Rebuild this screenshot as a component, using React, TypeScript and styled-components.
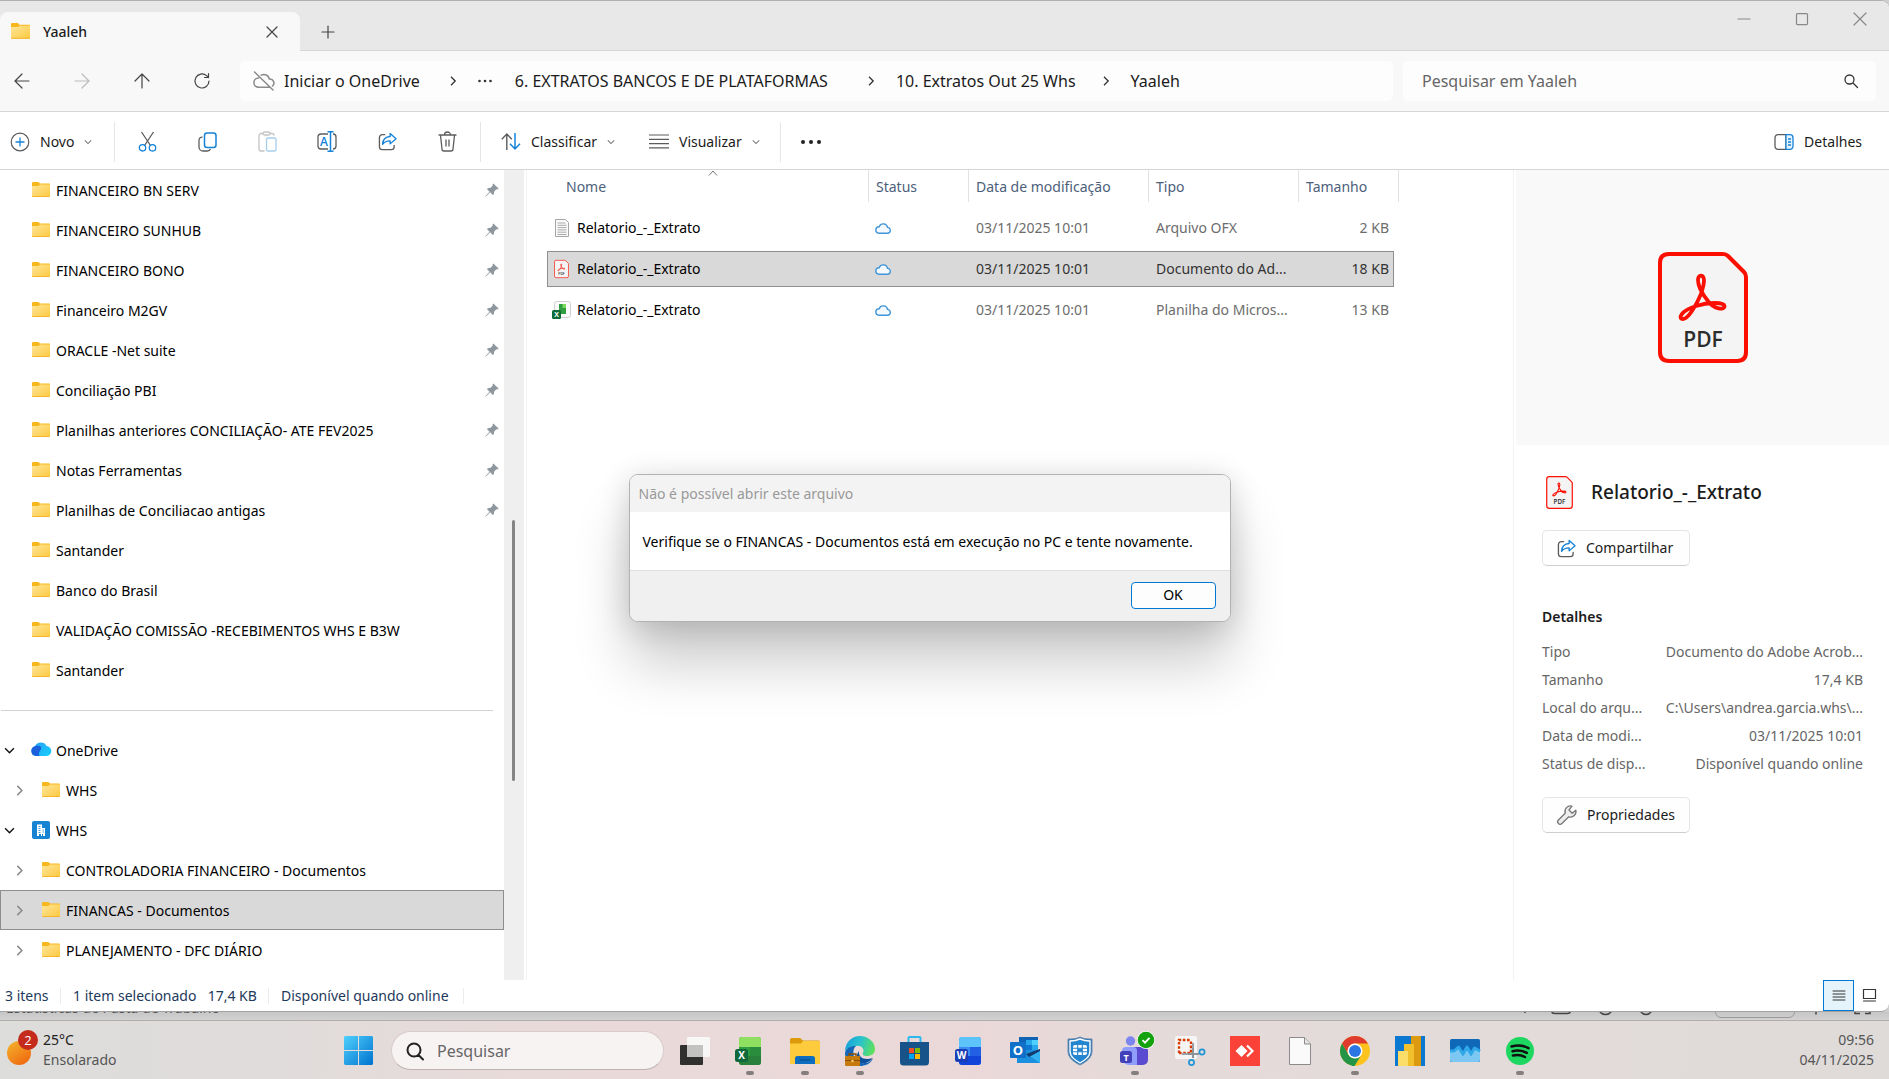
import React from "react";
import styled, { createGlobalStyle, css } from "styled-components";

const GlobalStyle = createGlobalStyle`
  *, *::before, *::after { box-sizing: border-box; }
  body { margin: 0; background: #cfcfcf; }
  body, button, input { font-family: "Noto Sans", "Open Sans", sans-serif; font-size: 14px; line-height: 20px; color: #1b1b1b; }
  button { background: none; border: 0; padding: 0; margin: 0; cursor: default; }
  h1, h2, p, dl, dd, dt, ul { margin: 0; padding: 0; font-weight: 400; list-style: none; }
`;

/* ---------- shell ---------- */

const Desktop = styled.div`
  min-height: 100vh;
  display: flex;
  flex-direction: column;
  position: relative;
  background: #cfcfcf;
`;

const ExplorerWindow = styled.section`
  flex: 1;
  display: flex;
  flex-direction: column;
  position: relative;
  background: #fff;
  border-top: 1px solid #b0b0b0;
  border-bottom: 1px solid #a3a3a3;
  border-radius: 0 8px 8px 0;
  overflow: hidden;
`;

const Svg = styled.svg`
  display: block;
  flex: none;
  overflow: visible;
`;

const Gap = styled.span<{ $w: number }>`
  width: ${(p) => p.$w}px;
  flex: none;
`;

/* ---------- title bar ---------- */

const TitleBar = styled.header`
  height: 50px;
  display: flex;
  align-items: flex-end;
  background: #e8e8e8;
  box-shadow: inset 0 -1px 0 #d6d6d6;
`;

const Tab = styled.div`
  width: 300px;
  height: 39px;
  display: flex;
  align-items: center;
  padding: 0 21px 0 11px;
  gap: 13px;
  background: #f8f8f8;
  border-radius: 8px 8px 0 0;
`;

const TabTitle = styled.h1`
  flex: 1;
  font-size: 14px;
  line-height: 20px;
  font-weight: 500;
`;

const IconButton = styled.button<{ $w?: number; $h?: number }>`
  width: ${(p) => p.$w ?? 60}px;
  height: ${(p) => p.$h ?? 40}px;
  display: flex;
  align-items: center;
  justify-content: center;
  flex: none;
`;

const WindowControls = styled.div`
  align-self: flex-start;
  margin-left: auto;
  display: flex;
`;

/* ---------- navigation ---------- */

const NavBar = styled.nav`
  height: 61px;
  display: flex;
  align-items: center;
  padding-right: 13px;
  background: #f8f8f8;
  border-bottom: 1px solid #d6d6d6;
`;

const NavButtons = styled.div`
  display: flex;
  width: 240px;
  margin-left: -8px;
  margin-right: 8px;
`;

const AddressBar = styled.div`
  flex: 1;
  height: 40px;
  display: flex;
  align-items: center;
  padding-left: 13px;
  background: #fdfdfd;
  border-radius: 5px;
`;

const Crumb = styled.button`
  font-size: 16px;
  line-height: 24px;
  white-space: nowrap;
`;

const CrumbChevron = styled.span<{ $w: number }>`
  width: ${(p) => p.$w}px;
  padding-right: 20px;
  display: flex;
  justify-content: flex-end;
  flex: none;
`;

const SearchBox = styled.label`
  width: 473px;
  height: 40px;
  margin-left: 10px;
  display: flex;
  align-items: center;
  padding: 0 18px 0 19px;
  background: #fdfdfd;
  border-radius: 5px;
`;

const SearchInput = styled.input`
  flex: 1;
  min-width: 0;
  border: 0;
  outline: 0;
  padding: 0;
  background: transparent;
  font-size: 16px;
  line-height: 24px;
  &::placeholder { color: #666; opacity: 1; }
`;

/* ---------- toolbar ---------- */

const ToolBar = styled.div`
  height: 58px;
  display: flex;
  align-items: center;
  padding: 2px 27px 0 10px;
  border-bottom: 1px solid #d6d6d6;
  background: #fff;
`;

const ToolButton = styled.button<{ $w?: number }>`
  height: 40px;
  display: flex;
  align-items: center;
  gap: 10px;
  width: ${(p) => (p.$w ? p.$w + "px" : "auto")};
  flex: none;
`;

const ToolDivider = styled.span`
  width: 1px;
  height: 40px;
  background: #e6e6e6;
  flex: none;
`;

const ToolSpacer = styled.span`
  flex: 1;
`;

/* ---------- body ---------- */

const Body = styled.div`
  flex: 1;
  display: flex;
  align-items: stretch;
`;

const Sidebar = styled.aside`
  width: 504px;
  flex: none;
  padding-bottom: 10px;
`;

const TreeRow = styled.li<{ $child?: boolean; $selected?: boolean }>`
  height: 40px;
  display: flex;
  align-items: center;
  padding: 0 5px 0 ${(p) => (p.$child ? 14 : 4)}px;
  white-space: nowrap;
  color: #000;
  ${(p) =>
    p.$selected &&
    css`
      background: #d9d9d9;
      box-shadow: inset 0 0 0 1px #8e8e8e;
    `}
`;

const TreeToggle = styled.span`
  width: 28px;
  flex: none;
`;

const TreeName = styled.span`
  flex: 1;
  padding: 1px 0 0 6px;
`;

const TreeSeparator = styled.li`
  height: 40px;
  display: flex;
  align-items: center;
  padding: 0 11px 0 1px;
  &::before { content: ""; flex: 1; height: 1px; background: #d2d2d2; }
`;

const ScrollTrack = styled.div`
  width: 20px;
  flex: none;
  background: #efefef;
`;

const ScrollThumb = styled.div`
  width: 3px;
  height: 261px;
  margin: 350px auto 0 8px;
  background: #858585;
  border-radius: 2px;
`;

const FilePane = styled.main`
  flex: 1;
  min-width: 0;
  margin-left: 2px;
  padding-left: 20px;
  border-left: 1px solid #f3f3f3;
`;

const FileTable = styled.table`
  display: block;
  thead, tbody { display: block; }
`;

const HeadRow = styled.tr`
  display: grid;
  grid-template-columns: 322px 100px 180px 150px 100px;
  height: 40px;
  align-items: start;
`;

const HeadCell = styled.th`
  position: relative;
  height: 32px;
  padding: 7px 0 0 7px;
  text-align: left;
  font-weight: 400;
  color: #4c607a;
  border-right: 1px solid #e2e2e2;
  &:first-child { padding-left: 19px; }
`;

const SortMark = styled.span`
  position: absolute;
  left: 50%;
  top: -2px;
`;

const FileRow = styled.tr<{ $selected?: boolean }>`
  display: grid;
  grid-template-columns: 322px 100px 180px 150px 95px;
  align-items: center;
  width: 847px;
  height: 36px;
  margin-bottom: 5px;
  color: ${(p) => (p.$selected ? "#333" : "#6d6d6d")};
  ${(p) =>
    p.$selected &&
    css`
      background: #d9d9d9;
      box-shadow: inset 0 0 0 1px #8e8e8e;
    `}
`;

const FileCell = styled.td<{ $right?: boolean }>`
  padding: ${(p) => (p.$right ? "0 5px 0 0" : "0 0 0 7px")};
  text-align: ${(p) => (p.$right ? "right" : "left")};
  white-space: nowrap;
`;

const FileName = styled.span`
  display: flex;
  align-items: center;
  gap: 8px;
  color: #000;
`;

const FileIcon = styled.span`
  width: 15px;
  display: flex;
  justify-content: center;
  flex: none;
`;

/* ---------- details pane ---------- */

const DetailsPane = styled.aside`
  width: 376px;
  flex: none;
  border-left: 1px solid #f3f3f3;
`;

const Preview = styled.div`
  height: 275px;
  margin-left: 2px;
  display: flex;
  justify-content: center;
  padding-top: 82px;
  background: #f9f9f9;
`;

const DetailsBody = styled.div`
  padding: 29px 26px 0 28px;
`;

const DetailsTitle = styled.div`
  display: flex;
  align-items: center;
  gap: 18px;
  padding-left: 4px;
  height: 36px;
  margin-bottom: 20px;
`;

const DetailsName = styled.h2`
  font-size: 19px;
  line-height: 24px;
  font-weight: 500;
`;

const PaneButton = styled.button`
  display: flex;
  align-items: center;
  gap: 10px;
  height: 36px;
  width: 148px;
  padding-left: 14px;
  border: 1px solid #e5e5e5;
  border-bottom-color: #cfcfcf;
  border-radius: 5px;
  background: #fefefe;
`;

const DetailsHeading = styled.h2`
  margin: 41px 0 11px;
  font-size: 14px;
  line-height: 20px;
  font-weight: 600;
`;

const DetailsList = styled.dl`
  margin-bottom: 19px;
`;

const DetailsRow = styled.div`
  display: flex;
  justify-content: space-between;
  height: 28px;
  align-items: center;
  white-space: nowrap;
  color: #666;
`;

/* ---------- status bar ---------- */

const StatusBar = styled.footer`
  height: 31px;
  display: flex;
  align-items: center;
  padding-left: 5px;
  color: #1e395b;
`;

const StatusItem = styled.span<{ $w: number }>`
  width: ${(p) => p.$w}px;
  margin-right: 12px;
  display: flex;
  justify-content: space-between;
  align-items: center;
  white-space: nowrap;
  &::after { content: ""; width: 1px; height: 16px; background: #ececec; }
`;

const ViewButtons = styled.div`
  margin-left: auto;
  display: flex;
  height: 31px;
`;

const ViewButton = styled.button<{ $active?: boolean }>`
  width: ${(p) => (p.$active ? 31 : 35)}px;
  padding-right: ${(p) => (p.$active ? 0 : 5)}px;
  display: flex;
  align-items: center;
  justify-content: center;
  ${(p) =>
    p.$active &&
    css`
      background: #e5f3fb;
      border: 1px solid #0078d4;
    `}
`;

/* ---------- sliver of the spreadsheet behind ---------- */

const BackWindow = styled.div`
  height: 8px;
  display: flex;
  align-items: flex-end;
  padding: 0 18px 0 6px;
  overflow: hidden;
  background: linear-gradient(#c6c6c6, #d2d2d2);
  color: #555;
`;

const BackText = styled.span`
  height: 22px;
  flex: 1;
  line-height: 20px;
  white-space: nowrap;
`;

const ZoomBox = styled.span`
  width: 80px;
  height: 24px;
  margin: 0 20px 2px 64px;
  padding-left: 8px;
  line-height: 19px;
  border: 1px solid #9a9a9a;
  border-radius: 6px;
`;

/* ---------- taskbar ---------- */

const TaskBar = styled.div`
  height: 60px;
  display: grid;
  grid-template-columns: 1fr auto 1fr;
  align-items: center;
  border-top: 1px solid #b3acac;
  background: linear-gradient(90deg, #dddddb 0%, #e0dcdb 15%, #e8dad9 28%, #ebd8d8 50%, #e4dad9 62%, #e2dbda 80%, #dfdbd9 100%);
`;

const Weather = styled.div`
  display: flex;
  align-items: center;
  padding-left: 7px;
  gap: 5px;
`;

const Stack = styled.div<{ $right?: boolean }>`
  display: flex;
  flex-direction: column;
  text-align: ${(p) => (p.$right ? "right" : "left")};
  padding: 0 ${(p) => (p.$right ? 15 : 0)}px 2px 0;
  color: #555;
`;

const Temperature = styled.span`
  color: #222;
`;

const TaskItems = styled.div`
  display: flex;
  align-items: center;
  padding-right: 11px;
`;

const TaskButton = styled.button<{ $open?: boolean }>`
  position: relative;
  width: 55px;
  height: 59px;
  display: flex;
  align-items: center;
  justify-content: center;
  ${(p) =>
    p.$open &&
    css`
      &::after {
        content: "";
        position: absolute;
        left: 24px;
        bottom: 5px;
        width: 8px;
        height: 4px;
        border-radius: 2px;
        background: #857e7e;
      }
    `}
`;

const TaskSearch = styled.label`
  width: 273px;
  height: 39px;
  margin: 0 3px 0 5px;
  display: flex;
  align-items: center;
  gap: 13px;
  padding: 0 14px;
  border: 1px solid #d9cccc;
  border-bottom-color: #bfb3b3;
  border-radius: 20px;
  background: #f8f3f3;
`;

/* ---------- message box ---------- */

const Dialog = styled.div`
  position: absolute;
  left: calc(50% - 316px);
  top: 474px;
  width: 602px;
  border: 1px solid #b2b2b2;
  border-radius: 9px;
  overflow: hidden;
  background: #fff;
  box-shadow: 0 42px 56px rgba(0, 0, 0, 0.2), 0 4px 30px rgba(0, 0, 0, 0.16);
`;

const DialogTitle = styled.h2`
  height: 37px;
  padding: 9px;
  font-size: 14px;
  line-height: 20px;
  color: #999;
  background: #f3f3f3;
`;

const DialogText = styled.p`
  height: 58px;
  padding: 20px 13px;
  color: #000;
  white-space: nowrap;
`;

const DialogFooter = styled.div`
  height: 51px;
  display: flex;
  justify-content: flex-end;
  align-items: center;
  padding: 0 14px 2px 0;
  border-top: 1px solid #dfdfdf;
  background: #f0f0f0;
`;

const OkButton = styled.button`
  width: 85px;
  height: 27px;
  border: 1px solid #0078d4;
  border-radius: 4px;
  background: #fdfdfd;
  color: #000;
`;

/* ---------- icons ---------- */

const BLUE = "#1683d8";
const GREY = "#5c5c5c";

const Folder = ({ w = 18 }: { w?: number }) => (
  <Svg width={w} height={w - 1} viewBox="0 0 18 17">
    <defs>
      <linearGradient id="folder" x1="0" y1="0" x2="1" y2="1">
        <stop offset="0" stopColor="#ffe59a" />
        <stop offset="1" stopColor="#fdc93f" />
      </linearGradient>
    </defs>
    <path d="M0 1a1 1 0 0 1 1-1h5.500L8 1.600H17a1 1 0 0 1 1 1V4H0z" fill="#f8b71c" />
    <path d="M0 4h6.500L8 2.600h10V14a1 1 0 0 1-1 1H1a1 1 0 0 1-1-1z" fill="url(#folder)" />
    <path d="M.3 14.500h17.400" stroke="#f3b52b" />
  </Svg>
);

const Chevron = ({ dir, size = 10, color = "#333", sw = 1.3 }: { dir: "up" | "down" | "right"; size?: number; color?: string; sw?: number }) => {
  const d = { up: "M1 7.500 5 3l4 4.500", down: "M1 3l4 4 4-4", right: "M3 .8 7.200 5 3 9.200" }[dir];
  return (
    <Svg width={size} height={size} viewBox="0 0 10 10" fill="none" stroke={color} strokeWidth={sw}>
      <path d={d} />
    </Svg>
  );
};

const Line = ({ d, w = 16, h = 16, color = "#444", sw = 1.2 }: { d: string; w?: number; h?: number; color?: string; sw?: number }) => (
  <Svg width={w} height={h} viewBox={`0 0 ${w} ${h}`} fill="none" stroke={color} strokeWidth={sw} strokeLinecap="round" strokeLinejoin="round">
    <path d={d} />
  </Svg>
);

const Pin = () => (
  <Svg width="14" height="14" viewBox="0 0 14 14">
    <path d="M8.300.4 13.600 5.600 12.200 6.600 11.400 6.300 9.200 8.600 8.800 11.300 7.800 12 5.200 9.300 1 13.400.3 13.700.6 12.900 4.600 8.700 2 6.200 2.700 5.300 5.600 4.800 7.800 2.600 7.500 1.500z" fill="#8e979e" />
  </Svg>
);

const ShareIcon = ({ size = 19 }: { size?: number }) => (
  <Svg width={size} height={size} viewBox="0 0 20 20" fill="none" strokeWidth="1.4" strokeLinejoin="round" strokeLinecap="round">
    <path d="M7 2.800H4.500A3 3 0 0 0 1.500 5.800V15.500a3 3 0 0 0 3 3H14a3 3 0 0 0 3-3V14" stroke={GREY} />
    <path d="M12.800 1.500 19 7l-6.200 5.500V9.300C9 9.200 6.800 10.400 4.800 13 5 8.200 8 5 12.800 4.700z" stroke={BLUE} />
  </Svg>
);

const PdfIcon = ({ w, h }: { w: number; h: number }) => (
  <Svg width={w} height={h} viewBox="0 0 90 111">
    <path d="M11 2h54q3 0 5 2l16 16q2 2 2 5v75q0 9-9 9H11q-9 0-9-9V11q0-9 9-9z" fill="#f4f4f4" stroke="#fa0f00" strokeWidth="4" />
    <path d="M43 42C38 54 30 67 25 67c-5 0-3-8 13-13 12-4 28-4 28.500 0C67 58 56 58 50 49 45 43 40 34 40 28c0-6 6-6 6 1 0 5-2 9-3 13z" fill="none" stroke="#fa0f00" strokeWidth="3.800" />
    <text x="45" y="95" textAnchor="middle" fontFamily="Open Sans, sans-serif" fontWeight="600" fontSize="21" fill="#2c2c2c">PDF</text>
  </Svg>
);

const CloudIcon = () => (
  <Svg width="16" height="12" viewBox="1 0 16 12" fill="#f4faff" stroke="#3f95d9" strokeWidth="1.400">
    <path d="M4 11.200h8.200a2.900 2.900 0 0 0 .4-5.800A4.400 4.400 0 0 0 4.200 4.700 3.200 3.200 0 0 0 4 11.200z" />
  </Svg>
);

const TextFileIcon = () => (
  <Svg width="14" height="18" viewBox="0 0 14 18">
    <path d="M.5.500h10l3 3v14H.5z" fill="#fafafa" stroke="#a5a5a5" />
    <path d="M2.500 4h8M2.500 6.300h9M2.500 8.600h9M2.500 10.900h9M2.500 13.200h9M2.500 15.500h9" stroke="#a9a9a9" />
  </Svg>
);

const ExcelFileIcon = () => (
  <Svg width="19" height="18" viewBox="0 0 19 18">
    <rect x="2.500" y=".5" width="16" height="16" rx="2" fill="#fafafa" stroke="#d0d0d0" />
    <rect x="7" y="3" width="7" height="10" fill="#2f9e41" />
    <rect x="10.500" y="3" width="3.500" height="4" fill="#7bd95c" />
    <rect x="0" y="9" width="9" height="9" rx="1.500" fill="#0f6b38" />
    <text x="4.500" y="16" textAnchor="middle" fontFamily="Open Sans, sans-serif" fontWeight="700" fontSize="7" fill="#fff">X</text>
  </Svg>
);

const OneDriveIcon = () => (
  <Svg width="18" height="14" viewBox="1 1 18 14">
    <defs>
      <linearGradient id="od" x1="0" y1="0" x2="1" y2="0.600">
        <stop offset="0" stopColor="#2a9df4" />
        <stop offset="1" stopColor="#19c8fb" />
      </linearGradient>
    </defs>
    <path d="M5 14a5 5 0 0 1-1-9.800A6.500 6.500 0 0 1 15.600 4 5 5 0 0 1 15 14z" fill="url(#od)" />
    <path d="M5 14A5 5 0 0 1 4 4.200C8 3 12 4.500 9.500 8 8 10 7 13 9 14z" fill="#1a5fdc" />
  </Svg>
);

const CompanyIcon = () => (
  <Svg width="18" height="18" viewBox="0 0 18 18">
    <rect width="18" height="18" rx="2" fill="#1784d3" />
    <path d="M5 15V3.500h5V7h3v8h-2v-2h-1v2H9v-2H7v2z" fill="#fff" />
    <path d="M6.500 5.500h2M6.500 7.500h2M6.500 9.500h2M6.500 11.500h2M10.500 9h1.500M10.500 11h1.500" stroke="#1784d3" strokeWidth=".8" />
  </Svg>
);

const AppTile = ({ letter, tint }: { letter: string; tint: [string, string, string, string] }) => (
  <Svg width="30" height="30" viewBox="0 0 30 30">
    <rect x="4" y="1" width="22" height="28" rx="3" fill={tint[1]} />
    <path d="M4 11V4a3 3 0 0 1 3-3h16a3 3 0 0 1 3 3v7z" fill={tint[0]} />
    <path d="M15 20V11h11v9z" fill={tint[2]} opacity=".6" />
    <path d="M4 20h22v6a3 3 0 0 1-3 3H7a3 3 0 0 1-3-3z" fill={tint[2]} />
    <rect x="0" y="13" width="13" height="13" rx="2.500" fill={tint[3]} />
    <text x="6.500" y="23" textAnchor="middle" fontFamily="Open Sans, sans-serif" fontWeight="700" fontSize="10" fill="#fff">{letter}</text>
  </Svg>
);

const WindowsLogo = () => (
  <Svg width="29" height="29" viewBox="0 0 29 29">
    <defs>
      <linearGradient id="win" x1="0" y1="0" x2="1" y2="1">
        <stop offset="0" stopColor="#4fd0fb" />
        <stop offset="1" stopColor="#0072d0" />
      </linearGradient>
    </defs>
    <path d="M1 0h13v14H0V1zM15 0h13l1 1v13H15zM0 15h14v14H1l-1-1zM15 15h14v13l-1 1H15z" fill="url(#win)" />
  </Svg>
);

const TaskView = () => (
  <Svg width="30" height="28" viewBox="0 0 30 28">
    <rect x="0" y="8" width="23" height="20" rx="1" fill="#30302f" />
    <rect x="7" y="0" width="23" height="20" rx="1" fill="#fafafa" opacity=".9" />
    <rect x="7" y="8" width="16" height="12" fill="#c4c1c1" />
  </Svg>
);

const ExplorerIcon = () => (
  <Svg width="30" height="26" viewBox="0 0 30 26">
    <path d="M0 1.500A1.500 1.500 0 0 1 1.500 0H10l3 2.500h15.500A1.500 1.500 0 0 1 30 4v6H0z" fill="#dd9b0c" />
    <path d="M0 5.500h11l2-2.500h17v23H0z" fill="#fdcb3c" />
    <path d="M5 26v-5.500a2.500 2.500 0 0 1 2.500-2.500h15a2.500 2.500 0 0 1 2.500 2.500V26z" fill="#0d6dbe" />
    <path d="M10 22h10" stroke="#0a4a88" strokeWidth="1.200" strokeLinecap="round" />
  </Svg>
);

const EdgeIcon = () => (
  <Svg width="30" height="30" viewBox="0 0 30 30">
    <defs>
      <linearGradient id="edge" x1="0" y1="0.300" x2="1" y2="0.500">
        <stop offset="0" stopColor="#1a9fdc" />
        <stop offset=".5" stopColor="#29c3cc" />
        <stop offset="1" stopColor="#5fe15a" />
      </linearGradient>
    </defs>
    <path d="M0 16C0 6 7 0 15 0s15 6 15 13c0 5-4 7-8 7-3 0-5-1-4-3 2-4-2-8-7-7C5 10 1 13 0 16z" fill="url(#edge)" />
    <path d="M0 17C1 12 6 9.500 11 10c-2 2-3 4-2.500 8C9 24 14 28 20 27c3 0 5-1.500 8-4-3 5-8 7-13 7C6 30 0 24 0 17z" fill="#1366b8" />
    <path d="M14 15c-1 6 5 10 14 7-3 4-8 6-12 5-4-1-6-7-2-12z" fill="#0e4f99" />
    <rect x="0" y="20" width="15" height="10" rx="1" fill="#c67a0b" />
    <path d="M4 20v-2h7v2" fill="none" stroke="#8a4f06" strokeWidth="1.500" />
    <path d="M0 24.500h15" stroke="#8a4f06" />
    <circle cx="7.500" cy="25" r="1.200" fill="#ffd463" />
  </Svg>
);

const StoreIcon = () => (
  <Svg width="30" height="30" viewBox="0 0 30 30">
    <path d="M8.500 7V2a1 1 0 0 1 1-1h10a1 1 0 0 1 1 1v5" fill="none" stroke="#2cb8ee" strokeWidth="2" />
    <path d="M0 6h29v20a3.500 3.500 0 0 1-3.500 3.500h-22A3.500 3.500 0 0 1 0 26z" fill="#175288" />
    <path d="M9 12h5v5H9z" fill="#f04f23" />
    <path d="M15 12h5v5h-5z" fill="#80b900" />
    <path d="M9 18h5v5H9z" fill="#00a3ee" />
    <path d="M15 18h5v5h-5z" fill="#ffb800" />
  </Svg>
);

const OutlookIcon = () => (
  <Svg width="30" height="27" viewBox="0 0 30 27">
    <rect x="9" y="0" width="19" height="15" fill="#0f63b5" />
    <path d="M16 3h6v5h-6z" fill="#28a8ea" />
    <path d="M22 3h6v5h-6z" fill="#50d0ff" />
    <path d="M16 8h6v5h-6z" fill="#0f78d4" />
    <path d="M22 8h6v5h-6z" fill="#28a8ea" />
    <path d="M7 13h23v13H7z" fill="#1a90de" />
    <path d="M30 13v13L17 17z" fill="#33b2f2" />
    <path d="M16 17l14-5v2L19 20z" fill="#123b6d" />
    <rect x="0" y="5" width="16" height="16" rx="1" fill="#0f6fc9" />
    <text x="8" y="18" textAnchor="middle" fontFamily="Open Sans, sans-serif" fontWeight="700" fontSize="13" fill="#fff">O</text>
  </Svg>
);

const ShieldIcon = () => (
  <Svg width="26" height="30" viewBox="0 0 26 30">
    <path d="M13 1c4 2 8 2 12 2v12c0 7-6 11-12 14C7 26 1 22 1 15V3c4 0 8 0 12-2z" fill="#1b74bd" stroke="#6e8ca8" strokeWidth="1" />
    <path d="M13 3c3.500 1.500 7 2 10 2v10c0 6-5 9-10 12C8 24 3 21 3 15V5c3 0 6.500-.5 10-2z" fill="#2384cf" stroke="#fff" strokeWidth="1.400" />
    <rect x="6" y="9" width="14" height="10" rx="2" fill="#fff" />
    <path d="M6 12.300h14M6 15.700h14M10.700 9v10M15.300 9v10" stroke="#2384cf" strokeWidth="1.100" />
    <rect x="11" y="12.500" width="4" height="3" fill="#2384cf" />
  </Svg>
);

const TeamsIcon = () => (
  <Svg width="30" height="30" viewBox="0 0 30 30">
    <circle cx="10.500" cy="5" r="4.700" fill="#7d85f0" />
    <path d="M14 11h10a4 4 0 0 1 4 4v9a5 5 0 0 1-5 5h-9z" fill="#5a4bd0" />
    <path d="M2 15a4 4 0 0 1 4-4h7a4 4 0 0 1 4 4v14H9a7 7 0 0 1-7-7z" fill="#8f9dfb" />
    <rect x="0" y="15" width="12" height="12" rx="2.500" fill="#4140b8" />
    <text x="6" y="25" textAnchor="middle" fontFamily="Open Sans, sans-serif" fontWeight="700" fontSize="9" fill="#fff">T</text>
    <circle cx="26" cy="4" r="9" fill="#fff" />
    <circle cx="26" cy="4" r="8.300" fill="#13a10e" />
    <path d="M22.500 4.200 25 6.700l4.500-4.800" fill="none" stroke="#fff" strokeWidth="1.800" />
  </Svg>
);

const SnipIcon = () => (
  <Svg width="30" height="30" viewBox="0 0 30 30" fill="none">
    <rect x="0" y="0" width="22" height="23" rx="2" fill="#f6f5f5" />
    <path d="M4 17V4h12" stroke="#d83b01" strokeWidth="2.400" strokeDasharray="2.600 1.600" />
    <path d="M4 17h12V5" stroke="#d83b01" strokeWidth="2.400" strokeDasharray="2.600 1.600" />
    <path d="M7 18h11V7" stroke="#9aa0a6" strokeWidth="2" />
    <path d="M18 12v10M13 18h11" stroke="#8c939a" strokeWidth="2" />
    <circle cx="16.500" cy="26.500" r="2.600" stroke="#1e96d6" strokeWidth="1.700" />
    <circle cx="27" cy="16" r="2.600" stroke="#1e96d6" strokeWidth="1.700" />
  </Svg>
);

const AnyDeskIcon = () => (
  <Svg width="30" height="30" viewBox="0 0 30 30">
    <rect width="30" height="30" fill="#fa4238" />
    <path d="M11.500 9l6 6-6 6-6-6z" fill="#fff" />
    <path d="M17 9.500 22.500 15 17 20.500" fill="none" stroke="#fff" strokeWidth="2.200" />
  </Svg>
);

const BlankFileIcon = () => (
  <Svg width="22" height="28" viewBox="0 0 22 28">
    <path d="M.5.500h15l6 6.500v20.500H.5z" fill="#fafafa" stroke="#8b8b8b" />
    <path d="M15.500.500V7h6" fill="#e4e4e4" stroke="#8b8b8b" />
  </Svg>
);

const ChromeIcon = () => (
  <Svg width="30" height="30" viewBox="0 0 30 30">
    <circle cx="15" cy="15" r="15" fill="#fcc31e" />
    <path d="M15 0a15 15 0 0 1 13 7.500H15a7.500 7.500 0 0 0-6.500 11.200L2 7.500A15 15 0 0 1 15 0z" fill="#df3b2f" />
    <path d="M2 7.500 8.500 18.800A7.500 7.500 0 0 0 17 22.200L14.500 30A15 15 0 0 1 2 7.500z" fill="#249447" />
    <path d="M8.500 18.800a7.500 7.500 0 0 0 13 0L14.500 30H12z" fill="#249447" />
    <circle cx="15" cy="15" r="7.500" fill="#fff" />
    <circle cx="15" cy="15" r="6" fill="#2c76e3" />
  </Svg>
);

const PowerBiIcon = () => (
  <Svg width="30" height="30" viewBox="0 0 30 30">
    <rect width="30" height="30" fill="#0a78d0" />
    <rect x="16" y="0" width="10" height="30" fill="#dc9a10" />
    <rect x="9" y="8" width="10" height="22" fill="#f2c02c" />
    <rect x="3" y="15" width="10" height="15" fill="#fbdd6a" />
  </Svg>
);

const MonitorIcon = () => (
  <Svg width="30" height="23" viewBox="0 0 30 23">
    <rect width="30" height="23" rx="1.500" fill="#0f69b8" />
    <path d="M0 13h4l5-4 4 8 4-8 4 8 4-8 5 4v8a2 2 0 0 1-2 2H2a2 2 0 0 1-2-2z" fill="#7cc8f2" />
    <path d="M0 12h4l4.500-4 4.500 7 4-7 4 7 3.500-6 5.500 3" fill="none" stroke="#2fa8ea" strokeWidth="3" strokeLinejoin="round" />
  </Svg>
);

const SpotifyIcon = () => (
  <Svg width="28" height="28" viewBox="0 0 28 28">
    <circle cx="14" cy="14" r="14" fill="#1ed760" />
    <path d="M5.500 9.500c5.500-1.600 12-1.200 17 1.700M6.500 14.200c4.500-1.300 10-.8 14.300 1.700M7 18.500c4-1 8.500-.6 12 1.500" fill="none" stroke="#111" strokeWidth="2.500" strokeLinecap="round" />
  </Svg>
);

const WeatherIcon = () => (
  <Svg width="31" height="38" viewBox="0 0 31 38">
    <defs>
      <linearGradient id="sun" x1="0" y1="0" x2="0.700" y2="1">
        <stop offset="0" stopColor="#f4b62d" />
        <stop offset="1" stopColor="#f06a10" />
      </linearGradient>
    </defs>
    <circle cx="12" cy="21" r="12" fill="url(#sun)" />
    <circle cx="21" cy="8" r="10" fill="#c42b1c" />
    <text x="21" y="13" textAnchor="middle" fontFamily="Open Sans, sans-serif" fontSize="13" fill="#fff">2</text>
  </Svg>
);

/* ---------- data ---------- */

const pinned = [
  "FINANCEIRO BN SERV",
  "FINANCEIRO SUNHUB",
  "FINANCEIRO BONO",
  "Financeiro M2GV",
  "ORACLE -Net suite",
  "Conciliação PBI",
  "Planilhas anteriores CONCILIAÇÃO- ATE FEV2025",
  "Notas Ferramentas",
  "Planilhas de Conciliacao antigas",
];

const recent = ["Santander", "Banco do Brasil", "VALIDAÇÃO COMISSÃO -RECEBIMENTOS WHS E B3W", "Santander"];

const libraries = ["CONTROLADORIA FINANCEIRO - Documentos", "FINANCAS - Documentos", "PLANEJAMENTO - DFC DIÁRIO"];

const files = [
  { icon: <TextFileIcon />, type: "Arquivo OFX", size: "2 KB" },
  { icon: <PdfIcon w={15} h={18} />, type: "Documento do Ad...", size: "18 KB", selected: true },
  { icon: <ExcelFileIcon />, type: "Planilha do Micros...", size: "13 KB" },
];

const details = [
  ["Tipo", "Documento do Adobe Acrob..."],
  ["Tamanho", "17,4 KB"],
  ["Local do arqu...", "C:\\Users\\andrea.garcia.whs\\..."],
  ["Data de modi...", "03/11/2025 10:01"],
  ["Status de disp...", "Disponível quando online"],
];

const apps: { name: string; icon: React.ReactNode; open?: boolean }[] = [
  { name: "Visão de tarefas", icon: <TaskView /> },
  { name: "Excel", icon: <AppTile letter="X" tint={["#8fe060", "#2f9e41", "#28803a", "#11683a"]} />, open: true },
  { name: "Explorador de Arquivos", icon: <ExplorerIcon />, open: true },
  { name: "Edge", icon: <EdgeIcon />, open: true },
  { name: "Store", icon: <StoreIcon /> },
  { name: "Word", icon: <AppTile letter="W" tint={["#5cc3fb", "#3a8bf3", "#1144d8", "#1a3fb4"]} /> },
  { name: "Outlook", icon: <OutlookIcon /> },
  { name: "VPN", icon: <ShieldIcon /> },
  { name: "Teams", icon: <TeamsIcon />, open: true },
  { name: "Ferramenta de Captura", icon: <SnipIcon /> },
  { name: "AnyDesk", icon: <AnyDeskIcon /> },
  { name: "Documento", icon: <BlankFileIcon /> },
  { name: "Chrome", icon: <ChromeIcon />, open: true },
  { name: "Power BI", icon: <PowerBiIcon /> },
  { name: "Monitor", icon: <MonitorIcon /> },
  { name: "Spotify", icon: <SpotifyIcon />, open: true },
];

/* ---------- parts ---------- */

const TreeItem = ({ name, icon, open, child, pin, selected }: { name: string; icon?: React.ReactNode; open?: boolean; child?: boolean; pin?: boolean; selected?: boolean }) => (
  <TreeRow $child={child} $selected={selected}>
    <TreeToggle>
      {open && <Chevron dir="down" size={11} color="#111" />}
      {child && <Chevron dir="right" size={11} color="#888" />}
    </TreeToggle>
    {icon ?? <Folder />}
    <TreeName>{name}</TreeName>
    {pin && <Pin />}
  </TreeRow>
);

const Commands = () => (
  <ToolBar>
    <ToolButton $w={104}>
      <Svg width="20" height="20" viewBox="0 0 20 20" fill="none">
        <circle cx="10" cy="10" r="8.800" stroke={GREY} strokeWidth="1.200" />
        <path d="M10 5.500v9M5.500 10h9" stroke={BLUE} strokeWidth="1.300" />
      </Svg>
      Novo
      <Chevron dir="down" size={8} color="#777" />
    </ToolButton>
    <ToolDivider />
    <Gap $w={2} />
    <IconButton aria-label="Recortar">
      <Svg width="19" height="21" viewBox="0 0 19 21" fill="none" strokeWidth="1.300">
        <path d="M3.500 1 12.500 14.500M15.500 1 6.500 14.500" stroke={GREY} />
        <circle cx="4.500" cy="16.800" r="3.200" stroke={BLUE} />
        <circle cx="14.500" cy="16.800" r="3.200" stroke={BLUE} />
      </Svg>
    </IconButton>
    <IconButton aria-label="Copiar">
      <Svg width="19" height="20" viewBox="0 0 19 20" fill="none" strokeWidth="1.300">
        <path d="M4.500 5.200A3 3 0 0 0 1 8v7a4 4 0 0 0 4 4h4a3.500 3.500 0 0 0 3.500-2" stroke={GREY} />
        <rect x="6.500" y="1" width="11.500" height="14.500" rx="2.500" stroke={BLUE} strokeWidth="1.500" />
      </Svg>
    </IconButton>
    <IconButton aria-label="Colar" disabled>
      <Svg width="19" height="21" viewBox="0 0 19 21" fill="none" strokeWidth="1.300">
        <path d="M5 2.500H3A2 2 0 0 0 1 4.500V18a2 2 0 0 0 2 2h3.500M12 2.500h2a2 2 0 0 1 2 2" stroke="#c4c4c4" />
        <rect x="5" y="1" width="7" height="3" rx="1.500" stroke="#c4c4c4" />
        <rect x="8.500" y="7" width="9.500" height="13" rx="1.500" stroke="#a5cdec" />
      </Svg>
    </IconButton>
    <IconButton aria-label="Renomear">
      <Svg width="20" height="21" viewBox="0 0 20 21" fill="none" strokeWidth="1.300">
        <path d="M11 3H4a3 3 0 0 0-3 3v9a3 3 0 0 0 3 3h7M16 3a3 3 0 0 1 3 3v9a3 3 0 0 1-3 3" stroke={GREY} />
        <path d="M10.500.8h6M10.500 20.200h6M13.500.8v19.400" stroke={BLUE} strokeWidth="1.500" />
        <text x="7" y="15" textAnchor="middle" fontFamily="Open Sans, sans-serif" fontSize="12" fontWeight="600" fill={BLUE}>A</text>
      </Svg>
    </IconButton>
    <IconButton aria-label="Compartilhar"><ShareIcon /></IconButton>
    <IconButton aria-label="Excluir">
      <Svg width="19" height="21" viewBox="0 0 19 21" fill="none" stroke={GREY} strokeWidth="1.300" strokeLinecap="round">
        <path d="M1 4h17M6.500 4a3 3 0 0 1 6 0M2.500 4.200 4 18a2 2 0 0 0 2 2h7a2 2 0 0 0 2-2l1.500-13.800M8 9v6M11 9v6" />
      </Svg>
    </IconButton>
    <Gap $w={3} />
    <ToolDivider />
    <Gap $w={20} />
    <ToolButton $w={148}>
      <Svg width="20" height="17" viewBox="0 0 20 17" fill="none" strokeWidth="1.400">
        <path d="M5.800 17V1M.8 6.200 5.800 1l5 5.200" stroke={GREY} />
        <path d="M14 0v16M9 10.800l5 5.200 5-5.200" stroke={BLUE} strokeWidth="1.500" />
      </Svg>
      Classificar
      <Chevron dir="down" size={8} color="#777" />
    </ToolButton>
    <ToolButton $w={131}>
      <Svg width="20" height="15" viewBox="0 0 20 15" stroke={GREY} strokeWidth="1.200">
        <path d="M0 1h20M0 5.300h20M0 9.600h20M0 13.900h20" />
      </Svg>
      Visualizar
      <Chevron dir="down" size={8} color="#777" />
    </ToolButton>
    <ToolDivider />
    <IconButton aria-label="Ver mais">
      <Svg width="20" height="4" viewBox="0 0 20 4" fill="#222">
        <circle cx="2" cy="2" r="2" /><circle cx="10" cy="2" r="2" /><circle cx="18" cy="2" r="2" />
      </Svg>
    </IconButton>
    <ToolSpacer />
    <ToolButton>
      <Svg width="20" height="16" viewBox="0 0 20 16" fill="none" strokeWidth="1.300">
        <path d="M12 .7H4a3 3 0 0 0-3 3v8.600a3 3 0 0 0 3 3h8z" stroke={GREY} />
        <path d="M12 .7h4a3 3 0 0 1 3 3v8.600a3 3 0 0 1-3 3h-4z" stroke={BLUE} fill="#e7f3fc" />
        <path d="M14 5h3M14 8h3M14 11h3" stroke={BLUE} />
      </Svg>
      Detalhes
    </ToolButton>
  </ToolBar>
);

const Details = () => (
  <DetailsPane>
    <Preview><PdfIcon w={90} h={111} /></Preview>
    <DetailsBody>
      <DetailsTitle>
        <PdfIcon w={27} h={33} />
        <DetailsName>Relatorio_-_Extrato</DetailsName>
      </DetailsTitle>
      <PaneButton><ShareIcon />Compartilhar</PaneButton>
      <DetailsHeading>Detalhes</DetailsHeading>
      <DetailsList>
        {details.map(([label, value]) => (
          <DetailsRow key={label}>
            <dt>{label}</dt>
            <dd>{value}</dd>
          </DetailsRow>
        ))}
      </DetailsList>
      <PaneButton>
        <Svg width="20" height="20" viewBox="0 0 20 20" fill="#ededed" stroke="#777" strokeWidth="1.300" strokeLinejoin="round">
          <path d="M18.800 5.200 15.200 8.200 12 5l3-3.800a5.500 5.500 0 0 0-6.800 7L1.400 15a2.400 2.400 0 0 0 3.500 3.500l6.900-6.700a5.500 5.500 0 0 0 7-6.600z" />
        </Svg>
        Propriedades
      </PaneButton>
    </DetailsBody>
  </DetailsPane>
);

export default function App() {
  return (
    <Desktop>
      <GlobalStyle />
      <ExplorerWindow>
        <TitleBar>
          <Tab>
            <Folder w={19} />
            <TabTitle>Yaaleh</TabTitle>
            <IconButton $w={14} $h={20} aria-label="Fechar guia"><Line d="M1 1l10 10M11 1 1 11" w={12} h={12} /></IconButton>
          </Tab>
          <IconButton $w={56} $h={38} aria-label="Nova guia"><Line d="M6 0v12M0 6h12" w={12} h={12} /></IconButton>
          <WindowControls>
            <IconButton $w={58} $h={36} aria-label="Minimizar"><Line d="M0 6h12" w={12} h={12} color="#888" /></IconButton>
            <IconButton $w={58} $h={36} aria-label="Maximizar"><Line d="M1.500.600h9q1 0 1 1v9q0 1-1 1h-9q-1 0-1-1v-9q0-1 1-1z" w={12} h={12} color="#888" /></IconButton>
            <IconButton $w={58} $h={36} aria-label="Fechar"><Line d="M0 0l12 12M12 0 0 12" w={12} h={12} color="#888" /></IconButton>
          </WindowControls>
        </TitleBar>

        <NavBar>
          <NavButtons>
            <IconButton aria-label="Voltar"><Line d="M15 8H1M8 1 1 8l7 7" w={16} h={16} /></IconButton>
            <IconButton aria-label="Avançar"><Line d="M1 8h14M8 1l7 7-7 7" w={16} h={16} color="#bbb" /></IconButton>
            <IconButton aria-label="Acima"><Line d="M8 15V1M1 8l7-7 7 7" w={16} h={16} /></IconButton>
            <IconButton aria-label="Atualizar"><Line d="M15 8A7 7 0 1 1 12.500 2.600L14.500 4.500M14.500.500v4h-4" w={16} h={16} /></IconButton>
          </NavButtons>
          <AddressBar>
            <Svg width="22" height="20" viewBox="0 0 22 20" fill="none" stroke="#8a8a8a" strokeWidth="1.500" strokeLinecap="round">
              <path d="M1.500 1 20 19M5.500 7A4.600 4.600 0 0 0 5.500 16.200H16.500M8.200 4.200A5.500 5.500 0 0 1 16.400 8 4 4 0 0 1 19.500 15" />
            </Svg>
            <Gap $w={9} />
            <Crumb>Iniciar o OneDrive</Crumb>
            <CrumbChevron $w={58}><Chevron dir="right" size={10} /></CrumbChevron>
            <Svg width="14" height="4" viewBox="0 0 14 4" fill="#333"><circle cx="1.500" cy="2" r="1.300" /><circle cx="7" cy="2" r="1.300" /><circle cx="12.500" cy="2" r="1.300" /></Svg>
            <Gap $w={23} />
            <Crumb>6. EXTRATOS BANCOS E DE PLATAFORMAS</Crumb>
            <CrumbChevron $w={68}><Chevron dir="right" size={10} /></CrumbChevron>
            <Crumb>10. Extratos Out 25 Whs</Crumb>
            <CrumbChevron $w={55}><Chevron dir="right" size={10} /></CrumbChevron>
            <Crumb>Yaaleh</Crumb>
          </AddressBar>
          <SearchBox>
            <SearchInput type="text" placeholder="Pesquisar em Yaaleh" aria-label="Pesquisar em Yaaleh" />
            <Line d="M5.500 1a4.500 4.500 0 1 1 0 9 4.500 4.500 0 0 1 0-9zM9 9l4.500 4.500" w={14} h={14} color="#333" sw={1.300} />
          </SearchBox>
        </NavBar>

        <Commands />

        <Body>
          <Sidebar>
            <ul>
              {pinned.map((name) => <TreeItem key={name} name={name} pin />)}
              {recent.map((name, i) => <TreeItem key={i} name={name} />)}
              <TreeSeparator />
              <TreeItem name="OneDrive" icon={<OneDriveIcon />} open />
              <TreeItem name="WHS" child />
              <TreeItem name="WHS" icon={<CompanyIcon />} open />
              {libraries.map((name, i) => <TreeItem key={name} name={name} child selected={i === 1} />)}
            </ul>
          </Sidebar>
          <ScrollTrack><ScrollThumb /></ScrollTrack>
          <FilePane>
            <FileTable>
              <thead>
                <HeadRow>
                  <HeadCell>Nome<SortMark><Chevron dir="up" color="#777" sw={1} /></SortMark></HeadCell>
                  <HeadCell>Status</HeadCell>
                  <HeadCell>Data de modificação</HeadCell>
                  <HeadCell>Tipo</HeadCell>
                  <HeadCell>Tamanho</HeadCell>
                </HeadRow>
              </thead>
              <tbody>
                {files.map((f) => (
                  <FileRow key={f.type} $selected={f.selected}>
                    <FileCell><FileName><FileIcon>{f.icon}</FileIcon>Relatorio_-_Extrato</FileName></FileCell>
                    <FileCell><CloudIcon /></FileCell>
                    <FileCell>03/11/2025 10:01</FileCell>
                    <FileCell>{f.type}</FileCell>
                    <FileCell $right>{f.size}</FileCell>
                  </FileRow>
                ))}
              </tbody>
            </FileTable>
          </FilePane>
          <Details />
        </Body>

        <StatusBar>
          <StatusItem $w={56}>3 itens</StatusItem>
          <StatusItem $w={196}><span>1 item selecionado</span><span>17,4 KB</span></StatusItem>
          <StatusItem $w={183}>Disponível quando online</StatusItem>
          <ViewButtons>
            <ViewButton $active aria-label="Detalhes"><Line d="M0 1h12M0 4h12M0 7h12M0 10h12" w={12} h={11} color="#333" sw={1} /></ViewButton>
            <ViewButton aria-label="Ícones grandes"><Line d="M.5.500h12v9H.5zM.5 12h12" w={13} h={13} color="#333" sw={1.200} /></ViewButton>
          </ViewButtons>
        </StatusBar>
      </ExplorerWindow>

      <BackWindow>
        <BackText>Estatísticas de Pasta de Trabalho</BackText>
        <Svg width="127" height="8" viewBox="0 0 127 8" fill="none" stroke="#444" strokeWidth="1.500">
          <path d="M1 0v1M28 0q0 1.500 3 1.500h12q3 0 3-1.500M76 0q2 2.500 5.500 2.500T87 0M117 0q2 2.500 5 2.500T127 0" />
        </Svg>
        <ZoomBox>83%</ZoomBox>
        <Svg width="56" height="8" viewBox="0 0 56 8" fill="none" stroke="#444" strokeWidth="1.500">
          <path d="M1 0v2.500M40 0v1.500h5M50 1.500h5V0" />
        </Svg>
      </BackWindow>

      <TaskBar>
        <Weather>
          <WeatherIcon />
          <Stack><Temperature>25°C</Temperature><span>Ensolarado</span></Stack>
        </Weather>
        <TaskItems>
          <TaskButton aria-label="Iniciar"><WindowsLogo /></TaskButton>
          <TaskSearch>
            <Line d="M8 1.500a6.500 6.500 0 1 1 0 13 6.500 6.500 0 0 1 0-13zM12.500 13l4.500 4.500" w={18} h={18} color="#222" sw={2} />
            <SearchInput type="text" placeholder="Pesquisar" aria-label="Pesquisar" />
          </TaskSearch>
          {apps.map((a) => <TaskButton key={a.name} $open={a.open} aria-label={a.name}>{a.icon}</TaskButton>)}
        </TaskItems>
        <Stack $right><span>09:56</span><span>04/11/2025</span></Stack>
      </TaskBar>

      <Dialog role="dialog" aria-labelledby="msg-title">
        <DialogTitle id="msg-title">Não é possível abrir este arquivo</DialogTitle>
        <DialogText>Verifique se o FINANCAS - Documentos está em execução no PC e tente novamente.</DialogText>
        <DialogFooter><OkButton>OK</OkButton></DialogFooter>
      </Dialog>
    </Desktop>
  );
}
